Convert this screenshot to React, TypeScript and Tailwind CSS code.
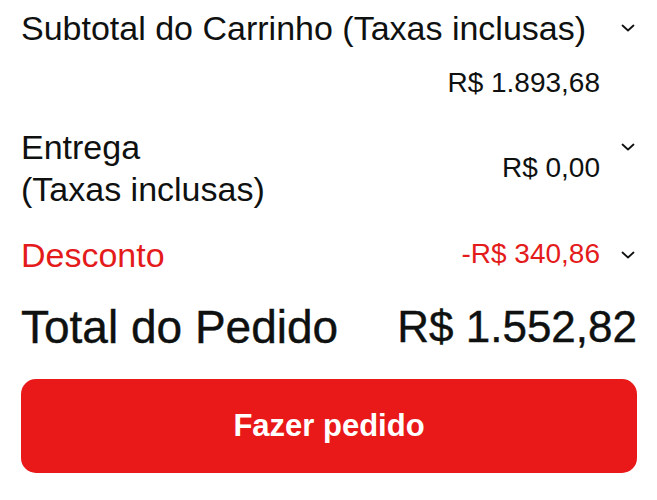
const Chevron = () => (
  <div className="flex w-[37px] shrink-0 justify-end pr-[2px]">
    <svg width="14" height="8" viewBox="0 0 14 8" fill="none" className="text-[#0f1111]">
      <path d="M1.5 1.5 L7 6.5 L12.5 1.5" stroke="currentColor" strokeWidth="1.8" strokeLinecap="round" strokeLinejoin="round" />
    </svg>
  </div>
);

export default function App() {
  return (
    <div className="min-h-[500px] w-[657px] bg-white pl-[21px] pr-[20px] pt-[7px] font-['Liberation_Sans',Arial,sans-serif] text-[#0f1111]">
      {/* Subtotal */}
      <div className="flex items-center">
        <span className="flex-1 text-[34px] leading-[42px]">Subtotal do Carrinho (Taxas inclusas)</span>
        <Chevron />
      </div>
      <div className="mt-[16px] flex justify-end pr-[37px] text-[28px] leading-[36px]">R$ 1.893,68</div>

      {/* Entrega */}
      <div className="mt-[25px] flex items-start">
        <div className="flex flex-1 items-center justify-between">
          <span className="text-[34px] leading-[42px]">
            Entrega
            <br />
            (Taxas inclusas)
          </span>
          <span className="text-[28px] leading-[36px]">R$ 0,00</span>
        </div>
        <div className="flex h-[42px] items-center">
          <Chevron />
        </div>
      </div>

      {/* Desconto */}
      <div className="mt-[24px] flex items-center text-[#e41b1b]">
        <span className="flex-1 text-[34px] leading-[42px]">Desconto</span>
        <span className="mb-[3px] text-[28px] leading-[36px]">-R$ 340,86</span>
        <Chevron />
      </div>

      {/* Total */}
      <div className="mt-[25px] flex items-center justify-between leading-[52px] [-webkit-text-stroke:0.4px_#0f1111]">
        <span className="text-[46px]">Total do Pedido</span>
        <span className="text-[44px]">R$ 1.552,82</span>
      </div>

      <button className="mt-[26px] flex h-[94px] w-full items-center justify-center rounded-[15px] bg-[#e9191a] text-[31px] font-bold text-white">
        Fazer pedido
      </button>
    </div>
  );
}
